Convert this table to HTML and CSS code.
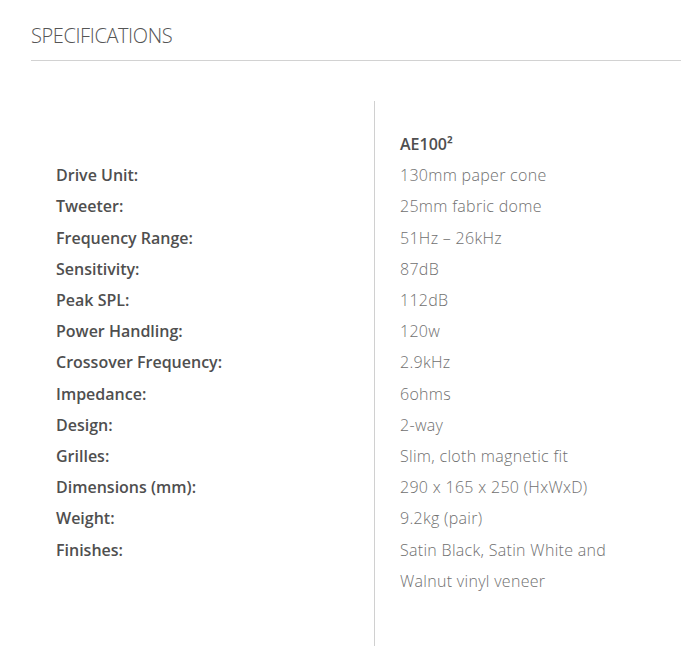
FILE: index.html
```html
<!DOCTYPE html>
<html lang="en">
<head>
<meta charset="utf-8">
<title>Specifications</title>
<link rel="stylesheet" href="styles.css">
</head>
<body>
<section class="specs">
  <h2 class="specs-title">SPECIFICATIONS</h2>
  <div class="spec-table">
    <div class="k first"></div>
    <div class="v first model">AE100²</div>
    <div class="k">Drive Unit:</div><div class="v">130mm paper cone</div>
    <div class="k">Tweeter:</div><div class="v">25mm fabric dome</div>
    <div class="k">Frequency Range:</div><div class="v">51Hz – 26kHz</div>
    <div class="k">Sensitivity:</div><div class="v">87dB</div>
    <div class="k">Peak SPL:</div><div class="v">112dB</div>
    <div class="k">Power Handling:</div><div class="v">120w</div>
    <div class="k">Crossover Frequency:</div><div class="v">2.9kHz</div>
    <div class="k">Impedance:</div><div class="v">6ohms</div>
    <div class="k">Design:</div><div class="v">2-way</div>
    <div class="k">Grilles:</div><div class="v">Slim, cloth magnetic fit</div>
    <div class="k">Dimensions (mm):</div><div class="v">290 x 165 x 250 (HxWxD)</div>
    <div class="k">Weight:</div><div class="v">9.2kg (pair)</div>
    <div class="k last">Finishes:</div><div class="v last">Satin Black, Satin White and Walnut vinyl veneer</div>
  </div>
</section>
</body>
</html>
```
FILE: styles.css
```css
html, body {
  margin: 0;
  padding: 0;
  background: #fff;
}
body {
  font-family: "Open Sans", "Liberation Sans", sans-serif;
}
.specs {
  padding-left: 31px;
  width: 650px;
}
.specs-title {
  margin: 0;
  padding: 24px 0 12px;
  font-size: 20px;
  line-height: 24px;
  font-weight: 300;
  color: #555;
  border-bottom: 1px solid #d2d2d2;
  letter-spacing: -0.4px;
}
.spec-table {
  display: grid;
  grid-template-columns: 343px 306px;
  margin-top: 40px;
  font-size: 16px;
  line-height: 31.2px;
}
.k {
  padding-left: 25px;
  font-weight: 600;
  color: #4f4f4f;
}
.v {
  padding: 0 40px 0 25px;
  border-left: 1px solid #d0d0d0;
  font-weight: 300;
  color: #707070;
  letter-spacing: 0.3px;
}
.v.model {
  font-weight: 600;
  color: #4f4f4f;
  letter-spacing: 0;
}
.first {
  padding-top: 28px;
}
.last {
  padding-bottom: 60px;
}
```
